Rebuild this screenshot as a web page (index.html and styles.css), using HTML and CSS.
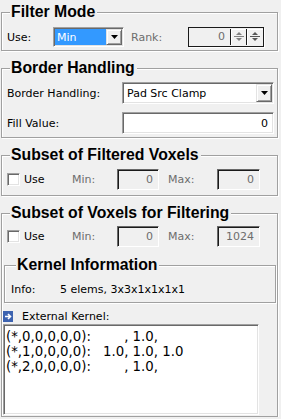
FILE: index.html
```html
<!DOCTYPE html>
<html>
<head>
<meta charset="utf-8">
<link rel="stylesheet" href="styles.css">
</head>
<body>
<fieldset class="group g1">
  <legend>Filter Mode</legend>
  <div class="row r20">
    <span class="lbl w-use">Use:</span>
    <div class="combo combo-min sunken">
      <span class="combo-val sel">Min</span>
      <span class="drop raised"><svg width="7" height="4" viewBox="0 0 7 4"><polygon points="0,0 7,0 3.5,4" fill="#000"/></svg></span>
    </div>
    <span class="lbl dis w-rank">Rank:</span>
    <div class="spin">
      <span class="spin-val">0</span>
      <span class="spin-btn"><svg width="12" height="14" viewBox="0 0 12 14"><polygon points="3,5 9,5 6,2" fill="#808080"/><line x1="1" y1="6.5" x2="11" y2="6.5" stroke="#808080"/><polygon points="3,8 9,8 6,11" fill="#808080"/></svg></span>
      <span class="spin-btn b2"><svg width="12" height="14" viewBox="0 0 12 14"><polygon points="3,5 9,5 6,2" fill="#555"/><line x1="1" y1="6.5" x2="11" y2="6.5" stroke="#555"/><polygon points="3,8 9,8 6,11" fill="#555"/></svg></span>
    </div>
  </div>
</fieldset>

<fieldset class="group g2">
  <legend>Border Handling</legend>
  <div class="row r22">
    <span class="lbl w-bh">Border Handling:</span>
    <div class="combo combo-wide sunken">
      <span class="combo-val">Pad Src Clamp</span>
      <span class="drop raised"><svg width="7" height="4" viewBox="0 0 7 4"><polygon points="0,0 7,0 3.5,4" fill="#000"/></svg></span>
    </div>
  </div>
  <div class="row r22 gap-top">
    <span class="lbl w-bh">Fill Value:</span>
    <div class="edit edit-wide sunken">0</div>
  </div>
</fieldset>

<fieldset class="group g3">
  <legend>Subset of Filtered Voxels</legend>
  <div class="row r21">
    <span class="check sunken"></span>
    <span class="lbl w-chk">Use</span>
    <span class="lbl dis w-min">Min:</span>
    <div class="edit edit-dis w-minbox">0</div>
    <span class="lbl dis w-max">Max:</span>
    <div class="edit edit-dis w-maxbox">0</div>
  </div>
</fieldset>

<fieldset class="group g4">
  <legend>Subset of Voxels for Filtering</legend>
  <div class="row r21 inset-row">
    <span class="check sunken"></span>
    <span class="lbl w-chk">Use</span>
    <span class="lbl dis w-min">Min:</span>
    <div class="edit edit-dis w-minbox">0</div>
    <span class="lbl dis w-max">Max:</span>
    <div class="edit edit-dis w-maxbox">1024</div>
  </div>
  <fieldset class="group kernel">
    <legend>Kernel Information</legend>
    <div class="info-row">
      <span class="info-lbl">Info:</span>
      <span>5 elems, 3x3x1x1x1x1</span>
    </div>
  </fieldset>
  <div class="ext-row">
    <span class="ext-icon"><svg width="10" height="11" viewBox="0 0 10 11"><rect width="10" height="11" fill="#3d63b0"/><path d="M2 5.5 H7 M5 3 L7.5 5.5 L5 8" stroke="#fff" stroke-width="1.6" fill="none"/></svg></span>
    <span class="ext-lbl">External Kernel:</span>
  </div>
  <div class="kbox sunken">
    <div class="kline"><span class="klbl">(*,0,0,0,0,0):</span><span class="ghost">1.0</span>, 1.0, </div>
    <div class="kline"><span class="klbl">(*,1,0,0,0,0):</span>1.0, 1.0, 1.0</div>
    <div class="kline"><span class="klbl">(*,2,0,0,0,0):</span><span class="ghost">1.0</span>, 1.0, </div>
  </div>
</fieldset>
</body>
</html>
```

FILE: styles.css
```css
html, body {
  margin: 0;
  background: #f0f0f0;
}
body {
  padding: 3px 3px 0 1px;
  font: 11px/13px "DejaVu Sans", sans-serif;
  color: #000;
  width: 277px;
}
.group {
  margin: 0 0 8px 0;
  padding: 0 0 0 5px;
  border: 1px solid #a0a0a0;
  box-shadow: inset 1px 1px 0 #fff, 1px 1px 0 #fff;
  min-width: 0;
}
.group legend {
  margin-left: 3px;
  padding: 0 2px 0 1px;
  font: bold 15.8px/18px "Liberation Sans", Arial, sans-serif;
  background: #f0f0f0;
}
.g1 { padding-top: 6px; padding-bottom: 3px; }
.g2 { padding-top: 5px; padding-bottom: 3px; }
.g3 { padding-top: 5px; padding-bottom: 5px; }
.g4 { padding: 4px 1px 1px 2px; margin-bottom: 0; }
.g4 > legend { margin-left: 6px; }

.row { display: flex; align-items: center; }
.r20 { height: 20px; }
.r21 { height: 21px; }
.r22 { height: 22px; }
.gap-top { margin-top: 8px; }
.inset-row { padding-left: 3px; }

.lbl { flex: none; white-space: nowrap; }
.dis { color: #6d6d6d; }
.w-use { width: 46px; }
.w-rank { width: 57px; margin-left: 7px; }
.w-bh { width: 115px; }
.w-chk { width: 48px; margin-left: 4px; }
.w-min { width: 45px; }
.w-max { width: 49px; margin-left: 9px; }

.sunken {
  box-sizing: border-box;
  border: 1px solid;
  border-color: #a0a0a0 #fff #fff #a0a0a0;
  box-shadow: inset 1px 1px 0 #696969, inset -1px -1px 0 #e3e3e3;
  padding: 1px;
}
.raised {
  box-sizing: border-box;
  background: #f0f0f0;
  border: 1px solid;
  border-color: #e3e3e3 #696969 #696969 #e3e3e3;
  box-shadow: inset 1px 1px 0 #fff, inset -1px -1px 0 #a0a0a0;
}

.combo {
  display: flex;
  background: #fff;
  flex: none;
}
.combo-min { width: 71px; height: 20px; }
.combo-wide { width: 152px; height: 22px; }
.combo-val {
  flex: 1;
  display: flex;
  align-items: center;
  padding-left: 3px;
  white-space: nowrap;
}
.combo-val.sel {
  background: #3399ff;
  color: #fff;
  padding-left: 2px;
}
.drop {
  width: 16px;
  flex: none;
  display: flex;
  align-items: center;
  justify-content: center;
}

.spin {
  box-sizing: border-box;
  display: flex;
  width: 76px;
  height: 20px;
  flex: none;
  background: #f0f0f0;
  margin-top: -1px;
  border: 1px solid #1a1a1a;
  border-right-color: #1a1a1a;
  box-shadow: 1px 1px 0 #fff;
  padding: 1px 0 1px 1px;
}
.spin-val {
  flex: 1;
  text-align: right;
  padding-right: 5px;
  color: #6d6d6d;
  line-height: 16px;
}
.spin-btn {
  box-sizing: border-box;
  width: 16px;
  flex: none;
  display: flex;
  align-items: center;
  justify-content: center;
  background: #f0f0f0;
  border-left: 1px solid #1a1a1a;
  box-shadow: inset 1px 1px 0 #fff;
}
.spin-btn.b2 { width: 17px; }

.edit {
  box-sizing: border-box;
  flex: none;
  background: #fff;
  text-align: right;
  padding: 1px 5px 1px 1px;
  display: flex;
  align-items: center;
  justify-content: flex-end;
}
.edit-wide { width: 152px; height: 22px; }
.edit-dis {
  background: #f0f0f0;
  color: #6d6d6d;
  height: 21px;
  border: 1px solid;
  border-color: #696969 #fff #fff #696969;
  box-shadow: inset 1px 1px 0 #1a1a1a;
}
.w-minbox { width: 42px; }
.w-maxbox { width: 43px; }

.check {
  width: 13px;
  height: 13px;
  flex: none;
  background: #fff;
}

.kernel {
  margin: 9px 0 0 0;
  padding: 8px 0 6px 6px;
}
.kernel legend { margin-left: 5px; }
.info-row { display: flex; height: 14px; align-items: center; }
.info-lbl { width: 49px; flex: none; }

.ext-row {
  display: flex;
  align-items: center;
  height: 14px;
  margin-top: 6px;
}
.ext-icon { width: 10px; height: 11px; flex: none; display: block; margin-left: -1px; }
.ext-icon svg { display: block; }
.ext-lbl { margin-left: 9px; }

.kbox {
  width: 256px;
  height: 91px;
  background: #fff;
  padding: 4px 2px;
  margin-top: 1px;
  margin-left: -1px;
  font: 13.3px/15px "DejaVu Sans", sans-serif;
}
.kline { white-space: pre; }
.klbl { display: inline-block; width: 97px; }
.ghost { visibility: hidden; }
```
